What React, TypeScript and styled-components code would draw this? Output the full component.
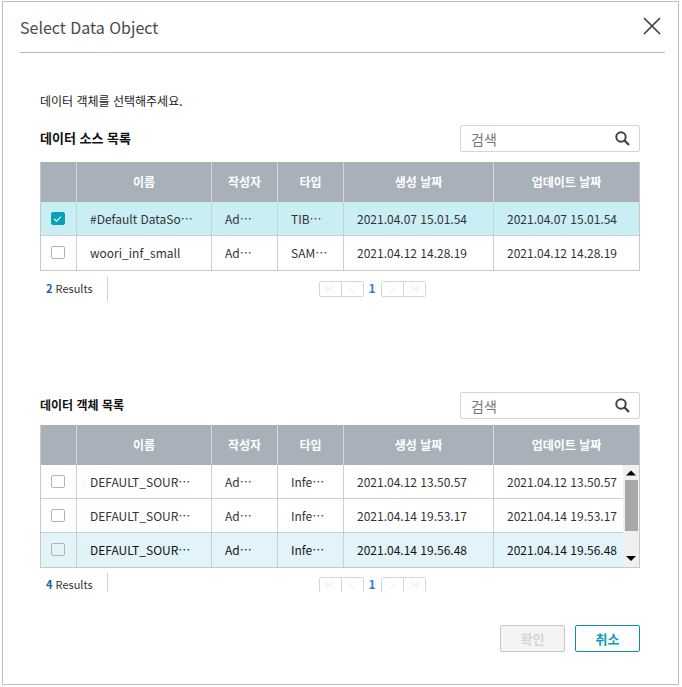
import React, { useState } from "react";
import styled, { createGlobalStyle } from "styled-components";

const GlobalStyle = createGlobalStyle`
  *, *::before, *::after { box-sizing: border-box; }
  body {
    margin: 0;
    background: #fff;
    color: #333;
    font-family: "Noto Sans CJK KR", "Noto Sans", sans-serif;
    font-size: 12px;
    line-height: 20px;
  }
  button, input { font: inherit; }
`;

const Dialog = styled.div`
  display: flex;
  flex-direction: column;
  margin: 1px 3px 2px 2px;
  min-height: calc(100vh - 3px);
  border: 1px solid #bfbfbf;
`;

const DialogHeader = styled.header`
  display: flex;
  align-items: center;
  justify-content: space-between;
  height: 51px;
  margin: 0 13px 0 17px;
  border-bottom: 1px solid #b9b9b9;
`;

const Title = styled.h1`
  margin: 0;
  font-size: 16px;
  font-weight: 400;
  line-height: 24px;
  color: #4a4a4a;
`;

const CloseButton = styled.button`
  display: flex;
  padding: 3px 4px 5px;
  border: 0;
  background: none;
  color: #3f3f3f;
`;

const Content = styled.main`
  padding: 38px 38px 0 37px;
`;

const Prompt = styled.p`
  margin: 0 0 14px;
  color: #222;
`;

const Section = styled.section<{ $spaced?: boolean }>`
  margin-top: ${(p) => (p.$spaced ? "91px" : "0")};
`;

const SectionHead = styled.div<{ $gap: number }>`
  display: flex;
  align-items: center;
  justify-content: space-between;
  margin-bottom: ${(p) => p.$gap}px;
`;

const SectionTitle = styled.h2<{ $small?: boolean }>`
  margin: 0;
  font-size: ${(p) => (p.$small ? 12 : 13)}px;
  font-weight: 700;
  line-height: 18px;
  padding-bottom: 2px;
  color: #111;
`;

const SearchBox = styled.label`
  display: flex;
  align-items: center;
  width: 180px;
  height: 27px;
  padding: 0 9px 0 10px;
  border: 1px solid #d3d6d9;
  border-radius: 2px;
  color: #444;
`;

const SearchInput = styled.input`
  flex: 1;
  min-width: 0;
  padding: 0;
  border: 0;
  outline: 0;
  background: none;
  font-size: 14px;
  line-height: 20px;
  &::placeholder { color: #757575; opacity: 1; }
`;

const TableFrame = styled.div`
  position: relative;
  border: 1px solid #c6c9cc;
  border-top: 0;
`;

const Table = styled.table`
  width: 100%;
  table-layout: fixed;
  border-collapse: separate;
  border-spacing: 0;
`;

const HeadCell = styled.th`
  height: 40px;
  padding: 0;
  background: #a8b0ba;
  color: #fff;
  font-weight: 700;
  line-height: 20px;
  &:not(:last-child) { border-right: 1px solid #d3d7dc; }
`;

type Tone = "plain" | "selected" | "hover";
const toneFill: Record<Tone, string> = {
  plain: "#fff",
  selected: "#c9eef3",
  hover: "#e2f4f9",
};

const Row = styled.tr<{ $tone: Tone }>`
  background: ${(p) => toneFill[p.$tone]};
  color: ${(p) => (p.$tone === "hover" ? "#111" : "#333")};
`;

const Cell = styled.td`
  height: 34px;
  padding: 0 0 0 13px;
  line-height: 20px;
  white-space: nowrap;
  overflow: hidden;
  &:not(:last-child) { border-right: 1px solid #cdd0d3; }
  tr:not(:last-child) > & { border-bottom: 1px solid #cdd0d3; }
`;

const CheckCell = styled(Cell)`
  padding: 0 0 1px 10px;
`;

const Check = styled.input`
  appearance: none;
  display: block;
  width: 14px;
  height: 13px;
  margin: 0;
  border: 1px solid #b4b4b4;
  border-radius: 2px;
  &:checked {
    border-color: #06a0b8;
    background: #06a0b8;
  }
  &:checked::after {
    content: "";
    display: block;
    width: 7px;
    height: 4px;
    margin: 3px 0 0 2px;
    border: solid #fff;
    border-width: 0 0 1px 1px;
    transform: rotate(-45deg);
  }
`;

const ScrollBar = styled.div`
  position: absolute;
  top: 40px;
  right: 0;
  bottom: 0;
  display: flex;
  flex-direction: column;
  align-items: center;
  width: 16px;
  background: #f0f0f0;
`;

const ScrollTrack = styled.div`
  flex: 1;
  width: 13px;
`;

const ScrollThumb = styled.div`
  height: 51px;
  background: #a8a8a8;
`;

const ScrollArrow = styled.svg`
  display: block;
  width: 16px;
  height: 15px;
`;

const TableFooter = styled.div<{ $clipped?: boolean }>`
  display: flex;
  align-items: flex-start;
  height: ${(p) => (p.$clipped ? 19 : 24)}px;
  margin-top: ${(p) => (p.$clipped ? 5 : 6)}px;
  overflow: hidden;
`;

const Count = styled.div`
  width: 68px;
  height: 24px;
  padding-left: 6px;
  border-right: 1px solid #cfcfcf;
  font-size: 11px;
  line-height: 22px;
  b { color: #1d5fa6; }
`;

const Pager = styled.nav`
  flex: 1;
  display: flex;
  justify-content: center;
  padding: 4px 4px 0 0;
`;

const PagerGroup = styled.div`
  display: flex;
  border: 1px solid #d6d6d6;
  border-radius: 2px;
`;

const PagerButton = styled.button`
  display: flex;
  align-items: center;
  justify-content: center;
  width: 21px;
  height: 14px;
  padding: 0;
  border: 0;
  background: #fff;
  color: #ececec;
  & + & {
    width: 22px;
    border-left: 1px solid #d6d6d6;
  }
`;

const PageNumber = styled.span`
  width: 17px;
  text-align: center;
  font-weight: 700;
  line-height: 14px;
  color: #3d7fce;
`;

const Actions = styled.div`
  display: flex;
  justify-content: flex-end;
  gap: 10px;
  margin-top: 33px;
`;

const ActionButton = styled.button`
  width: 65px;
  height: 27px;
  padding: 0;
  border: 1px solid #138fa5;
  border-radius: 2px;
  background: #fff;
  color: #0a9db5;
  font-size: 13px;
  font-weight: 700;
  line-height: 20px;
  &:disabled {
    border-color: #c8c8c8;
    background: #f4f4f4;
    color: #d4d4d4;
  }
`;

const pagerPaths = {
  first: "M1.5 1v8M9 1L5 5l4 4M3 5h2",
  prev: "M7 1L3 5l4 4",
  next: "M3 1l4 4-4 4",
  last: "M8.5 1v8M1 1l4 4-4 4M5 5h2",
};

function PagerIcon({ kind }: { kind: keyof typeof pagerPaths }) {
  return (
    <svg width="10" height="10" viewBox="0 0 10 10" fill="none" stroke="currentColor">
      <path d={pagerPaths[kind]} />
    </svg>
  );
}

function Search({ label }: { label: string }) {
  return (
    <SearchBox>
      <SearchInput type="text" placeholder="검색" aria-label={label} />
      <svg width="15" height="15" viewBox="0 0 15 15" fill="none" stroke="currentColor" strokeWidth="2">
        <circle cx="6" cy="6" r="4.7" />
        <path d="M9.4 9.4L14 14" strokeWidth="2.3" />
      </svg>
    </SearchBox>
  );
}

interface Item {
  name: string;
  author: string;
  type: string;
  created: string;
  updated: string;
  tone: Tone;
}

const sources: Item[] = [
  { name: "#Default DataSo…", author: "Ad…", type: "TIB…", created: "2021.04.07 15.01.54", updated: "2021.04.07 15.01.54", tone: "selected" },
  { name: "woori_inf_small", author: "Ad…", type: "SAM…", created: "2021.04.12 14.28.19", updated: "2021.04.12 14.28.19", tone: "plain" },
];

const objects: Item[] = [
  { name: "DEFAULT_SOUR…", author: "Ad…", type: "Infe…", created: "2021.04.12 13.50.57", updated: "2021.04.12 13.50.57", tone: "plain" },
  { name: "DEFAULT_SOUR…", author: "Ad…", type: "Infe…", created: "2021.04.14 19.53.17", updated: "2021.04.14 19.53.17", tone: "plain" },
  { name: "DEFAULT_SOUR…", author: "Ad…", type: "Infe…", created: "2021.04.14 19.56.48", updated: "2021.04.14 19.56.48", tone: "hover" },
];

const columnWidths = [36, 135, 66, 66, 150];

const Column = styled.col<{ $width?: number }>`
  width: ${(p) => (p.$width ? `${p.$width}px` : "auto")};
`;

function ItemTable({ items, scrolls }: { items: Item[]; scrolls?: boolean }) {
  const [checked, setChecked] = useState(items.map((i) => i.tone === "selected"));
  return (
    <TableFrame>
      <Table>
        <colgroup>
          {columnWidths.map((w, i) => (
            <Column key={i} $width={w} />
          ))}
          <Column />
        </colgroup>
        <thead>
          <tr>
            <HeadCell aria-label="선택" />
            <HeadCell>이름</HeadCell>
            <HeadCell>작성자</HeadCell>
            <HeadCell>타입</HeadCell>
            <HeadCell>생성 날짜</HeadCell>
            <HeadCell>업데이트 날짜</HeadCell>
          </tr>
        </thead>
        <tbody>
          {items.map((item, i) => (
            <Row key={i} $tone={item.tone}>
              <CheckCell>
                <Check
                  type="checkbox"
                  aria-label={item.name}
                  checked={checked[i]}
                  onChange={() => setChecked(checked.map((c, n) => (n === i ? !c : c)))}
                />
              </CheckCell>
              <Cell>{item.name}</Cell>
              <Cell>{item.author}</Cell>
              <Cell>{item.type}</Cell>
              <Cell>{item.created}</Cell>
              <Cell>{item.updated}</Cell>
            </Row>
          ))}
        </tbody>
      </Table>
      {scrolls && (
        <ScrollBar>
          <ScrollArrow viewBox="0 0 16 15">
            <path d="M3 10.500l5-5 5 5z" fill="#000" />
          </ScrollArrow>
          <ScrollTrack>
            <ScrollThumb />
          </ScrollTrack>
          <ScrollArrow viewBox="0 0 16 15">
            <path d="M3 4l5 5 5-5z" fill="#000" />
          </ScrollArrow>
        </ScrollBar>
      )}
    </TableFrame>
  );
}

function Footer({ total, clipped }: { total: number; clipped?: boolean }) {
  return (
    <TableFooter $clipped={clipped}>
      <Count>
        <b>{total}</b> Results
      </Count>
      <Pager>
        <PagerGroup>
          <PagerButton aria-label="처음" disabled><PagerIcon kind="first" /></PagerButton>
          <PagerButton aria-label="이전" disabled><PagerIcon kind="prev" /></PagerButton>
        </PagerGroup>
        <PageNumber>1</PageNumber>
        <PagerGroup>
          <PagerButton aria-label="다음" disabled><PagerIcon kind="next" /></PagerButton>
          <PagerButton aria-label="마지막" disabled><PagerIcon kind="last" /></PagerButton>
        </PagerGroup>
      </Pager>
    </TableFooter>
  );
}

export default function App() {
  return (
    <>
      <GlobalStyle />
      <Dialog lang="ko" role="dialog" aria-label="Select Data Object">
        <DialogHeader>
          <Title>Select Data Object</Title>
          <CloseButton aria-label="닫기">
            <svg width="18" height="18" viewBox="0 0 18 18" fill="none" stroke="currentColor" strokeWidth="1.700">
              <path d="M1 1l16 16M17 1L1 17" />
            </svg>
          </CloseButton>
        </DialogHeader>
        <Content>
          <Prompt>데이터 객체를 선택해주세요.</Prompt>
          <Section>
            <SectionHead $gap={10}>
              <SectionTitle>데이터 소스 목록</SectionTitle>
              <Search label="데이터 소스 검색" />
            </SectionHead>
            <ItemTable items={sources} />
            <Footer total={2} />
          </Section>
          <Section $spaced>
            <SectionHead $gap={6}>
              <SectionTitle $small>데이터 객체 목록</SectionTitle>
              <Search label="데이터 객체 검색" />
            </SectionHead>
            <ItemTable items={objects} scrolls />
            <Footer total={4} clipped />
          </Section>
          <Actions>
            <ActionButton disabled>확인</ActionButton>
            <ActionButton>취소</ActionButton>
          </Actions>
        </Content>
      </Dialog>
    </>
  );
}
